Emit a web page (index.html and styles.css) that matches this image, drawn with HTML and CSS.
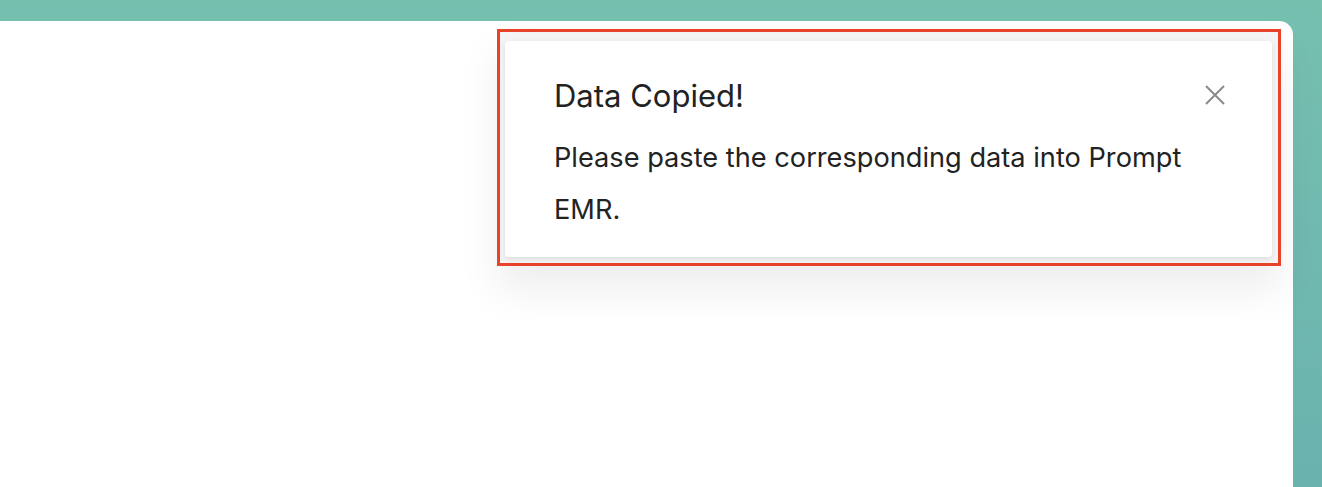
FILE: index.html
```html
<!DOCTYPE html>
<html lang="en">
<head>
    <meta charset="UTF-8">
    <meta name="viewport" content="width=device-width, initial-scale=1.0">
    <title>Prompt EMR</title>
    <link rel="stylesheet" href="styles.css">
</head>
<body>
    <div class="page"></div>

    <!-- Toast shown after copying -->
    <div class="toast-frame">
        <div class="toast" role="alert">
            <div class="toast-header">
                <h2 class="toast-title">Data Copied!</h2>
                <button type="button" class="toast-close" aria-label="Close">
                    <svg width="22" height="22" viewBox="0 0 22 22">
                        <path d="M2 2 L20 20 M20 2 L2 20" stroke="#8a8a8a" stroke-width="2" fill="none"/>
                    </svg>
                </button>
            </div>
            <p class="toast-body">Please paste the corresponding data into Prompt EMR.</p>
        </div>
    </div>
</body>
</html>
```

FILE: styles.css
```css
html, body {
    height: 100%;
}
body {
    margin: 0;
    font-family: Inter, "Noto Sans", sans-serif;
    background: linear-gradient(180deg, #76c0b0 0%, #6ab2ae 100%);
    overflow: hidden;
}
.page {
    margin-top: 21px;
    margin-right: 29px;
    height: calc(100% - 21px);
    background-color: #fff;
    border-top-right-radius: 14px;
}
.toast-frame {
    position: absolute;
    top: 29px;
    left: 497px;
    width: 778px;
    height: 231px;
    border: 3px solid #e8432a;
    background-color: #f4f4f4;
    box-shadow: 0 24px 40px rgba(0, 0, 0, 0.07);
}
.toast {
    position: absolute;
    top: 9px;
    left: 5px;
    right: 6px;
    bottom: 6px;
    background-color: #fff;
    border-radius: 4px;
    box-shadow: 0 2px 6px rgba(0, 0, 0, 0.1);
    padding: 0 49px;
}
.toast-header {
    display: flex;
    align-items: center;
    justify-content: space-between;
    padding-top: 37px;
}
.toast-title {
    margin: 0;
    font-size: 31px;
    font-weight: 400;
    color: #222;
    line-height: 36px;
}
.toast-close {
    background: none;
    border: none;
    padding: 0;
    margin-right: -3px;
    margin-top: -2px;
    cursor: pointer;
    display: flex;
}
.toast-body {
    margin: 18px 0 0;
    font-size: 27.2px;
    line-height: 52px;
    color: #222;
    max-width: 660px;
}
```
